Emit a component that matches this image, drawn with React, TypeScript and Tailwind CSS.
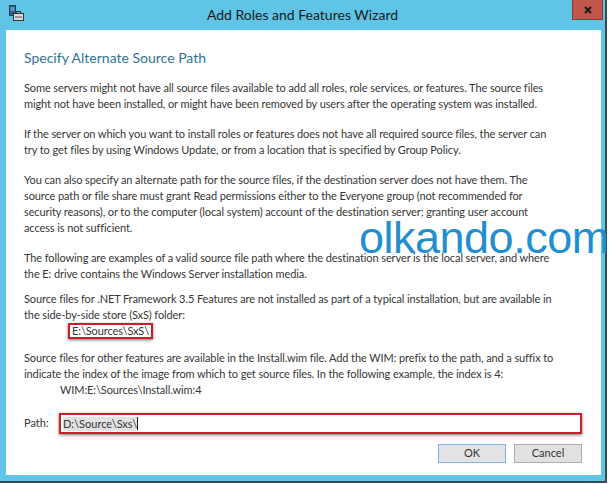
import React from 'react';

const paragraphs: { gap: string; lines: string[] }[] = [
    {
        gap: 'mt-0',
        lines: [
            'Some servers might not have all source files available to add all roles, role services, or features. The source files',
            'might not have been installed, or might have been removed by users after the operating system was installed.',
        ],
    },
    {
        gap: 'mt-[14px]',
        lines: [
            'If the server on which you want to install roles or features does not have all required source files, the server can',
            'try to get files by using Windows Update, or from a location that is specified by Group Policy.',
        ],
    },
    {
        gap: 'mt-[14px]',
        lines: [
            'You can also specify an alternate path for the source files, if the destination server does not have them. The',
            'source path or file share must grant Read permissions either to the Everyone group (not recommended for',
            'security reasons), or to the computer (local system) account of the destination server; granting user account',
            'access is not sufficient.',
        ],
    },
    {
        gap: 'mt-[14px]',
        lines: [
            'The following are examples of a valid source file path where the destination server is the local server, and where',
            'the E: drive contains the Windows Server installation media.',
        ],
    },
];

function ServerIcon() {
    return (
        <svg width="16" height="16" viewBox="0 0 16 16">
            <rect x="1.5" y="0.5" width="6" height="10" fill="#2f5f8a" stroke="#1d3d5c" />
            <line x1="2.5" y1="3" x2="6.5" y2="3" stroke="#9cc7ea" />
            <line x1="2.5" y1="5" x2="6.5" y2="5" stroke="#9cc7ea" />
            <rect x="5.5" y="8.5" width="10" height="7" fill="#d9d9d9" stroke="#333" />
            <rect x="8.5" y="6.5" width="4" height="2" fill="none" stroke="#333" />
            <line x1="7" y1="12" x2="14" y2="12" stroke="#555" />
        </svg>
    );
}

export default function App() {
    return (
        <div className="w-[609px] h-[484px] bg-white relative overflow-hidden" style={{ fontFamily: '"Lato", "Liberation Sans", sans-serif' }}>
            <div className="w-[607px] h-[483px] bg-[#5fc4e6] border-r-2 border-b-2 border-[#3c4a54] flex flex-col">
                {/* Title bar */}
                <div className="h-[30px] relative flex items-center justify-center shrink-0">
                    <div className="absolute left-[8px] top-[5px]">
                        <ServerIcon />
                    </div>
                    <span className="text-[14px] text-[#1b1b1b] -mt-[2px]">Add Roles and Features Wizard</span>
                    <div className="absolute right-[2px] top-0 w-[31px] h-[20px] bg-[#c4574b] border border-[#8a3a33] border-t-0 flex items-center justify-center">
                        <svg width="8" height="8" viewBox="0 0 8 8">
                            <path d="M1 1 L7 7 M7 1 L1 7" stroke="#1a1a1a" strokeWidth="2" />
                        </svg>
                    </div>
                </div>

                {/* Content */}
                <div className="flex-1 ml-[6px] mr-[4px] mb-[6px] bg-white pt-[18px] pl-[18px] pr-[19px] text-[#363636] flex flex-col">
                    <div className="text-[14px] leading-[20px] text-[#2f7393]">Specify Alternate Source Path</div>

                    <div className="mt-[12px] text-[11px] leading-[16px] tracking-[-0.1px] flex flex-col">
                        {paragraphs.map((p, i) => (
                            <div key={i} className={p.gap}>
                                {p.lines.map((l, j) => (
                                    <div key={j} className="whitespace-nowrap">{l}</div>
                                ))}
                            </div>
                        ))}
                        <div className="mt-[9px]">
                            <div className="whitespace-nowrap">Source files for .NET Framework 3.5 Features are not installed as part of a typical installation, but are available in</div>
                            <div className="whitespace-nowrap">the side-by-side store (SxS) folder:</div>
                            <div className="pl-[44px] h-[15px] flex items-center">
                                <span className="inline-block px-[2px] leading-[12px] border-2 border-[#c8202a] shadow-[0_1px_3px_rgba(0,0,0,0.55)]">E:\Sources\SxS\</span>
                            </div>
                        </div>
                        <div className="mt-[12px]">
                            <div className="whitespace-nowrap">Source files for other features are available in the Install.wim file. Add the WIM: prefix to the path, and a suffix to</div>
                            <div className="whitespace-nowrap">indicate the index of the image from which to get source files. In the following example, the index is 4:</div>
                            <div className="pl-[36px]">WIM:E:\Sources\Install.wim:4</div>
                        </div>
                    </div>

                    <div className="mt-[15px] flex items-center text-[11px]">
                        <span className="w-[35px]">Path:</span>
                        <div className="flex-1 h-[21px] border-2 border-[#c8202a] shadow-[0_1px_3px_rgba(0,0,0,0.55)] flex items-center pl-[2px]">
                            <span className="bg-[#e2e2e2] leading-[14px]">D:\Source\Sxs\</span>
                            <span className="w-px h-[13px] bg-[#222]" />
                        </div>
                    </div>

                    <div className="mt-[10px] flex justify-end gap-[8px] text-[11px]">
                        <button className="w-[68px] h-[19px] bg-[#e3e3e3] border border-[#7fb4e4] text-[#333]">OK</button>
                        <button className="w-[68px] h-[19px] bg-[#e1e1e1] border border-[#adadad] text-[#333]">Cancel</button>
                    </div>
                </div>
            </div>

            {/* watermark */}
            <div className="absolute left-[359px] top-[210px] text-[45px] leading-[56px] text-[#1f8fd0] tracking-[-0.5px] whitespace-nowrap" style={{ fontFamily: '"Liberation Sans", sans-serif' }}>
                olkando.com
            </div>
        </div>
    );
}
